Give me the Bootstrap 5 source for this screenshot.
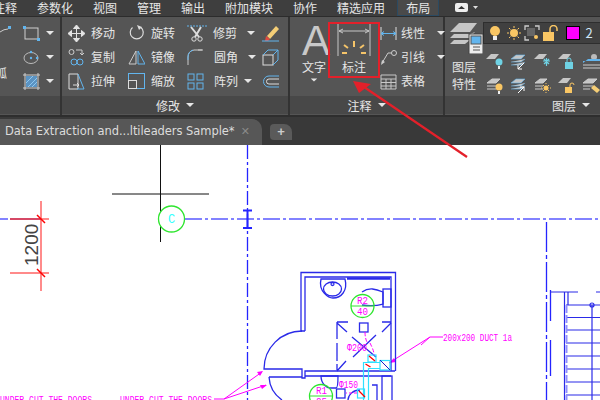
<!doctype html>
<html lang="zh"><head><meta charset="utf-8"><title>AutoCAD</title>
<link href="https://cdn.jsdelivr.net/npm/bootstrap@5.3.0/dist/css/bootstrap.min.css" rel="stylesheet">
<style>
html,body{margin:0;width:600px;height:400px;overflow:hidden;background:#fff}
.cad{position:relative;width:600px;height:400px;overflow:hidden;font-family:"Noto Sans CJK SC","Liberation Sans",sans-serif;font-size:12px;line-height:14px;color:#e6e6e6}
.menu{height:17px;background:#3e3e3e;border-bottom:1px solid #2c2c2c;gap:20px;white-space:nowrap}
.menu>span:first-child{margin-left:-7px}
.menu-on{margin-left:-8px;margin-right:-8px;height:16px;padding:0 8px;background:#4a4a4a;border:1px solid #2b4a62;border-top:0;line-height:15px}
.menu-ico{margin-left:3px;height:16px}
.rib{height:98px;background:#333}
.pnl{background:#555;width:60px;margin-right:2px}
.pnl2{width:226px}.pnl3{width:153px}.pnl4{width:155px;margin-right:0}
.pbody{height:79px}
.ptitle{height:18px;background:#484848;line-height:17px}
.caret{width:0;height:0;border-left:4px solid transparent;border-right:4px solid transparent;border-top:4px solid #e6e6e6;display:inline-block;flex:none}
.ptitle .caret{margin-left:6px}
.left-col{width:23px;overflow:hidden;padding-top:5px}
.left-col span{display:block;margin:30px 0 0 -5px}
.grid3{display:grid;grid-template-rows:repeat(3,24px);padding-top:4px}
.g-mod{grid-template-columns:60px 59px 75px 20px;padding-left:6px}
.g-l{grid-template-columns:34px}
.tool{display:flex;align-items:center;gap:6px;height:24px;white-space:nowrap}
.tool svg{width:17px;height:17px;flex:none}
.txt-big{width:38px;padding-left:12px}
.bigA{font:42px/34px "Liberation Sans",sans-serif;color:#c9c9c9;margin-top:7px;height:34px}
.bigA-lbl{margin-top:2px}
.bigA-car{margin:4px 0 0 8px;display:block;transform:scale(.8)}
.dim-col{width:52px;text-align:center;padding-top:7px}
.dim-col svg{width:34px;height:32px;display:block;margin:0 auto 4px}
.g-ann{grid-template-columns:63px}
.g-ann .tool{gap:4px}
.lyr-big{width:41px;padding-top:5px;text-align:center;line-height:17px}
.lyr-big svg{width:33px;height:32px;display:block;margin:0 0 4px 5px}
.combo{height:22px;background:#404040;border:1px solid #2e2e2e;margin-top:5px;width:120px;padding-left:3px;gap:2.500px}
.combo svg{width:16px;height:16px;flex:none}
.swatch{width:14px;height:14px;background:#f0f;border:1px solid #000;margin-left:5px;flex:none}
.combo-n{color:#cfe6f8;margin-left:3px;font-size:13px}
.lrow{height:24px;gap:6px}
.lrow svg{width:18px;height:18px;flex:none}
.lrows{padding:2px 0 0 3px}
.tabs{height:30px;background:#393939;border-top:2px solid #2e2e2e;padding-top:2px}
.tab-on{width:262px;height:26px;background:#575757;border-radius:0 10px 0 0;padding-left:5px;font:11.500px/25px "DejaVu Sans","Open Sans",sans-serif;letter-spacing:-.06px;color:#dcdcdc;white-space:nowrap}
.tab-x{margin-left:auto;margin-right:12px;font-size:11px;color:#8a8a8a;font-weight:bold}
.tab-plus{width:22px;height:16px;margin:5px 0 0 8px;background:#5a5a5a;border-radius:4px 8px 0 4px;color:#ccc;font:bold 13px/15px "Liberation Sans",sans-serif;text-align:center}
.sheet{height:255px;background:#fff}
.sheet svg{display:block}
.over{position:absolute;left:0;top:0;pointer-events:none}
.cadt{font-family:"Liberation Mono",monospace;fill:#f0f;font-size:10px}
</style></head><body>
<div class="cad d-flex flex-column">
<div class="menu d-flex align-items-center">
<span>注释</span><span>参数化</span><span>视图</span><span>管理</span><span>输出</span><span>附加模块</span><span>协作</span><span>精选应用</span><span class="menu-on">布局</span>
<svg class="menu-ico" width="24" height="12" viewBox="0 0 24 12"><rect x="1" y="1" width="13" height="9" rx="2" fill="#eee"/><path d="M4 7l3.500-3 3.500 3z" fill="#333"/><path d="M19 4h5l-2.500 3z" fill="#ddd"/></svg>
</div>
<div class="rib d-flex">
 <div class="pnl">
  <div class="pbody d-flex">
   <div class="left-col"><svg width="23" height="10" viewBox="0 0 23 10"><path d="M0 6q4-3 8-3" fill="none" stroke="#ccc"/><rect x="8" y="0" width="3" height="3" fill="#62b5ee"/></svg><span>弧</span></div>
   <div class="grid3 g-l">
    <div class="tool"><svg viewBox="0 0 17 17"><rect x="2" y="3" width="13" height="11" fill="none" stroke="#d0d0d0"/><rect x="0" y="1" width="3" height="3" fill="#62b5ee"/><rect x="14" y="13" width="3" height="3" fill="#62b5ee"/></svg><i class="caret"></i></div>
    <div class="tool"><svg viewBox="0 0 17 17"><ellipse cx="8" cy="9" rx="7" ry="5.500" fill="none" stroke="#bbb"/><circle cx="8" cy="3" r="1.200" fill="#62b5ee"/><circle cx="8" cy="9" r="1.200" fill="#62b5ee"/><circle cx="14" cy="9" r="1.200" fill="#62b5ee"/></svg><i class="caret"></i></div>
    <div class="tool"><svg viewBox="0 0 17 17"><path d="M2 0v17M15 0v17M0 2h17M0 15h17" stroke="#d0d0d0" fill="none"/><rect x="3" y="3" width="11" height="11" fill="#5b93c2"/><path d="M3 10l7-7M5 14l9-9M9 14l5-5" stroke="#8fc7ef"/></svg><i class="caret"></i></div>
   </div>
  </div>
  <div class="ptitle"></div>
 </div>
 <div class="pnl pnl2">
  <div class="pbody grid3 g-mod">
   <div class="tool"><svg viewBox="0 0 17 17"><path d="M8.500 1v15M1 8.500h15M8.500 0l3 3.500h-6zM8.500 17l3-3.500h-6zM0 8.500l3.500-3v6zM17 8.500l-3.500-3v6z" stroke="#e4e4e4" fill="#e4e4e4"/></svg><span>移动</span></div>
   <div class="tool"><svg viewBox="0 0 17 17"><path d="M13 2.500a6.500 6.500 0 1 1-8.500 0" fill="none" stroke="#ddd" stroke-width="1.200"/><path d="M9 0l5 2-3 3z" fill="#ddd"/></svg><span>旋转</span></div>
   <div class="tool"><svg viewBox="0 0 20 17" style="width:20px"><path d="M0 1h20" stroke="#62b5ee" stroke-dasharray="2 1"/><path d="M4 2l8 10M14 2l-6 10" stroke="#ddd" stroke-width="2"/><circle cx="7" cy="14" r="2.200" fill="none" stroke="#ddd"/><circle cx="13" cy="14" r="2.200" fill="none" stroke="#ddd"/></svg><span>修剪</span><i class="caret ms-1"></i></div>
   <svg viewBox="0 0 17 17" width="17" height="17" class="align-self-center"><path d="M5 11L14 1l3 3-9 10z" fill="#f5ce76"/><path d="M4 11l4 3-2 2H3z" fill="#e04a3f"/><path d="M0 16h17" stroke="#62b5ee"/></svg>

   <div class="tool"><svg viewBox="0 0 17 17"><circle cx="3.500" cy="3" r="2.500" fill="none" stroke="#ccc"/><circle cx="6" cy="13" r="3" fill="none" stroke="#62b5ee"/><circle cx="12" cy="13" r="3" fill="none" stroke="#62b5ee"/><path d="M8 1h6v4M12 4l2 2 2-2" fill="none" stroke="#ccc"/></svg><span>复制</span></div>
   <div class="tool"><svg viewBox="0 0 17 17"><path d="M8 2L1 15h7z" fill="none" stroke="#ccc"/><path d="M10 2l7 13h-7z" fill="none" stroke="#62b5ee"/></svg><span>镜像</span></div>
   <div class="tool"><svg viewBox="0 0 17 17"><path d="M1 16V8Q1 2 7 1h8M11 1h5" fill="none" stroke="#ccc"/><path d="M1 11V8Q1 3 6 1" fill="none" stroke="#62b5ee"/></svg><span class="ms-1">圆角</span><i class="caret ms-1"></i></div>
   <svg viewBox="0 0 17 17" width="17" height="17" class="align-self-center"><rect x="1" y="6" width="10" height="10" fill="none" stroke="#ddd"/><path d="M1 6l5-5h10v10l-5 5M11 6l5-5" fill="none" stroke="#62b5ee"/></svg>

   <div class="tool"><svg viewBox="0 0 17 17"><path d="M1 1h9v15H1z" fill="none" stroke="#ddd"/><path d="M10 1l6 15H9" fill="none" stroke="#62b5ee"/><path d="M5 12h6M9 10l2 2-2 2" stroke="#ddd" fill="none"/></svg><span>拉伸</span></div>
   <div class="tool"><svg viewBox="0 0 17 17"><rect x="0.500" y="0.500" width="16" height="15" fill="none" stroke="#62b5ee"/><rect x="0.500" y="7.500" width="8" height="8" fill="#555" stroke="#ddd"/></svg><span>缩放</span></div>
   <div class="tool"><svg viewBox="0 0 17 17"><g fill="none" stroke="#62b5ee"><rect x="1" y="1" width="6" height="6"/><rect x="10" y="1" width="6" height="6"/><rect x="1" y="10" width="6" height="6"/><rect x="10" y="10" width="6" height="6"/></g></svg><span class="ms-1">阵列</span><i class="caret"></i></div>
   <svg viewBox="0 0 17 17" width="17" height="17" class="align-self-center"><path d="M17 3H7a5 5 0 0 0 0 11h10" fill="none" stroke="#62b5ee"/><path d="M17 6H7a2.500 2.500 0 0 0 0 5h10" fill="none" stroke="#ddd"/></svg>
  </div>
  <div class="ptitle d-flex align-items-center justify-content-center">修改<i class="caret"></i></div>
 </div>
 <div class="pnl pnl3">
  <div class="pbody d-flex">
   <div class="txt-big"><div class="bigA">A</div><div class="bigA-lbl">文字</div><i class="caret bigA-car"></i></div>
   <div class="dim-col"><svg viewBox="0 0 34 32"><path d="M1 0v32M33 0v32M2 7h30M6 5L2 7l4 2M28 5l4 2-4 2" fill="none" stroke="#c8c8c8"/><path d="M17 17v6M7 21l4 3M27 21l-4 3M5 29h5M24 29h5" stroke="#f5c469" stroke-width="2"/></svg>标注</div>
   <div class="grid3 g-ann">
    <div class="tool"><svg viewBox="0 0 17 17"><path d="M1 2v13M16 2v13" stroke="#ddd"/><path d="M1 8.500h15M4 6.500L1 8.500l3 2M13 6.500l3 2-3 2" stroke="#62b5ee" fill="none"/></svg><span>线性</span><i class="caret ms-2"></i></div>
    <div class="tool"><svg viewBox="0 0 17 17"><circle cx="14" cy="4" r="2.500" fill="none" stroke="#ccc"/><path d="M11.500 4H8L2 14" fill="none" stroke="#ccc"/><path d="M1 16l1-5 3 2z" fill="#ccc"/></svg><span>引线</span><i class="caret ms-2"></i></div>
    <div class="tool"><svg viewBox="0 0 17 17"><path d="M1 2h15v14H1zM1 6h15M1 9.500h15M1 13h15M6 6v10M11 6v10" fill="none" stroke="#c8c8c8"/></svg><span>表格</span></div>
   </div>
  </div>
  <div class="ptitle d-flex align-items-center justify-content-center">注释<i class="caret"></i></div>
 </div>
 <div class="pnl pnl4">
  <div class="pbody d-flex">
   <div class="lyr-big"><svg viewBox="0 0 33 32"><g fill="#c6c6c6"><path d="M0 10L9 1h18l-7 9z"/><path d="M0 16l4-4h16l5-2-5 6z"/><path d="M0 22l4-4h16l-5 4z"/></g><rect x="19" y="12" width="14" height="20" fill="#eee" stroke="#444"/><rect x="21" y="14" width="10" height="8" fill="#62b5ee" stroke="#555"/><path d="M23 25h7M23 28h7" stroke="#555"/></svg>图层<br>特性</div>
   <div>
    <div class="combo d-flex align-items-center">
     <svg viewBox="0 0 16 16"><circle cx="8" cy="6" r="5" fill="#f9c664"/><rect x="6" y="11" width="4" height="4" fill="#eee"/></svg>
     <svg viewBox="0 0 16 16"><circle cx="8" cy="8" r="4" fill="#f9c664"/><path d="M8 1v2M8 13v2M1 8h2M13 8h2M3 3l1.500 1.500M13 3l-1.500 1.500M3 13l1.500-1.500M13 13l-1.500-1.500" stroke="#f9c664"/></svg>
     <svg viewBox="0 0 16 16"><path d="M1 5V1h4M11 1h4v4M1 11v4h4" fill="none" stroke="#ccc" stroke-width="1.300"/><rect x="3" y="3" width="8" height="8" fill="#666"/><circle cx="12" cy="12" r="2" fill="#f9c664"/></svg>
     <svg viewBox="0 0 16 16"><rect x="0" y="7" width="11" height="9" fill="#f9c664"/><path d="M7 7V4a3.500 3.500 0 0 1 7 0v2" fill="none" stroke="#f9c664" stroke-width="1.500"/></svg>
     <span class="swatch"></span><span class="combo-n">2</span>
    </div>
    <div class="lrows">
     <div class="lrow d-flex align-items-center mt-1">
      <svg viewBox="0 0 18 18"><path d="M0 6L5 1h8L9 6z" fill="#c6c6c6"/><circle cx="13" cy="9" r="3.500" fill="#6fd2e4"/><rect x="12" y="13" width="2" height="3" fill="#eee"/></svg>
      <svg viewBox="0 0 18 18"><path d="M1 6l5-4h9l-4 4zM1 9h10l4-3M1 12h10l4-3" fill="#c6c6c6" stroke="#62b5ee" stroke-width=".6"/><path d="M14 10l-6 6M8 12v4h4" stroke="#fff" fill="none"/></svg>
      <svg viewBox="0 0 18 18"><path d="M0 6L5 1h8L9 6z" fill="#c6c6c6"/><path d="M9 8h7M12.500 5v8M10 6l5 5M15 6l-5 5" stroke="#6fd2e4" stroke-width="1.200"/></svg>
      <svg viewBox="0 0 18 18"><path d="M0 6L5 1h8L9 6z" fill="#c6c6c6"/><rect x="7" y="9" width="8" height="7" fill="#6fd2e4"/><path d="M9 9V7a2 2 0 0 1 4 0v2" fill="none" stroke="#6fd2e4"/></svg>
      <svg viewBox="0 0 18 18"><circle cx="12" cy="4" r="3" fill="#bbb"/><path d="M1 10l5-4h12v2H1z" fill="#62b5ee"/><path d="M1 12h17M1 15h17" stroke="#ccc"/></svg>
     </div>
     <div class="lrow d-flex align-items-center">
      <svg viewBox="0 0 18 18"><path d="M1 6l5-4h8l-4 4zM1 9h9M1 12h9" fill="#c6c6c6" stroke="#ccc"/><circle cx="13" cy="10" r="3.500" fill="#f9c664"/><rect x="12" y="14" width="2" height="3" fill="#eee"/></svg>
      <svg viewBox="0 0 18 18"><path d="M1 6l5-4h9l-4 4zM1 9h10l4-3M1 12h10l4-3" fill="#c6c6c6" stroke="#62b5ee" stroke-width=".6"/><path d="M8 16l6-6M10 10h4v4" stroke="#fff" fill="none"/></svg>
      <svg viewBox="0 0 18 18"><path d="M1 6l5-4h7l-4 4zM1 9h8M1 12h8" fill="#c6c6c6" stroke="#ccc"/><circle cx="12" cy="11" r="2.500" fill="#f9c664"/><path d="M12 6v1M12 15v1M7 11h1M16 11h1M9 8l1 1M15 8l-1 1M9 14l1-1M15 14l-1-1" stroke="#f9c664"/></svg>
      <svg viewBox="0 0 18 18"><path d="M0 6L5 1h8L9 6z" fill="#c6c6c6"/><rect x="7" y="10" width="7" height="6" fill="#f9c664"/><path d="M12 10V8a2 2 0 0 1 4 0" fill="none" stroke="#f9c664"/></svg>
      <svg viewBox="0 0 18 18"><path d="M1 6l5-4h9l-4 4zM1 9h10M1 12h7" fill="#c6c6c6" stroke="#ccc"/><path d="M9 11l6 5 3-3-6-5z" fill="#f5ce76"/></svg>
     </div>
    </div>
   </div>
  </div>
  <div class="ptitle d-flex align-items-center" style="padding-left:107px">图层<i class="caret"></i></div>
 </div>
</div>
<div class="tabs d-flex">
 <div class="tab-on d-flex"><span>Data Extraction and...ltileaders Sample*</span><span class="tab-x">✕</span></div>
 <div class="tab-plus">+</div>
</div>
<div class="sheet">
<svg width="600" height="255" viewBox="0 145 600 255">
 <g fill="none" stroke="#5a5aff" stroke-width="1.500">
  <path d="M0 219H10" stroke-dasharray="8 2 2 2"/>
  <path d="M185 219H600" stroke-dasharray="17 3 3 3"/>
 </g>
 <g fill="none" stroke="#2424ff" stroke-width="1.300">
  <path d="M247.500 145V400" stroke-dasharray="14 3 3 3"/>
  <path d="M546.500 222V400" stroke-dasharray="30 3 4 3"/>
  <path d="M243 210.500h9M243 228h9" stroke-width="2"/><path d="M247.500 210v18" stroke-width="2"/>
  <path d="M550.500 290v31M550.500 340v36"/>
 </g>
 <path d="M112 194H209M160.500 145V242" stroke="#111" fill="none"/>
 <circle cx="171.500" cy="219" r="13" fill="#fff" stroke="#2fe52f" stroke-width="1.300"/>
 <text x="168" y="223" font-family="Liberation Mono,monospace" font-size="12" fill="#3ff">C</text>
 <g stroke="#ff6464" stroke-width="1.500" fill="none"><path d="M41 201V291"/><path d="M10 219H49M10 273H49"/></g>
 <path d="M10 219H41" stroke="#c8325a" stroke-width="1.500"/>
 <path d="M37 215l8 8M37 269l8 8" stroke="#f00" stroke-width="1.500"/>
 <text transform="translate(37.500,266) rotate(-90)" font-family="Liberation Sans,sans-serif" font-size="19" fill="#444">1200</text>

 <text class="cadt" x="0" y="403" textLength="92" lengthAdjust="spacingAndGlyphs">UNDER CUT THE DOORS</text>
 <text class="cadt" x="120" y="403" textLength="92" lengthAdjust="spacingAndGlyphs">UNDER CUT THE DOORS</text>
 <g stroke="#f0f" fill="none"><path d="M214 399h10l38-27M224 399l42-14"/><path d="M421 345l9-8h13M430 337l-41 26"/></g>
 <path d="M263 371l-6 1 3 4zM267 385l-7 0 2 4zM389 363l5-5 2 4z" fill="#f0f"/>
 <text class="cadt" x="443" y="341" textLength="69" lengthAdjust="spacingAndGlyphs" font-size="11">200x200 DUCT 1a</text>

 <g fill="none" stroke="#2a2ae8" stroke-width="1.300">
  <path d="M305 331H301V272.500H395.500V371M305 331V277H391V371"/>
  <path d="M347 278.500h43" stroke-width="2.500"/>
  <path d="M302 331A38 38 0 0 0 264 369H302V378H305V371H395"/>
  <path d="M305 376H391M269 377H302M269 377A30 30 0 0 0 282 400"/>
  <path d="M321 279c-3 13 8 19 12 19 8 0 15-7 12-19z"/>
  <ellipse cx="332.500" cy="289" rx="9" ry="7"/>
  <circle cx="332.500" cy="284" r="1.500"/>
  <path d="M362 292c7-5 14-3 21 0v12c-7 2-14 2-21 1"/>
  <rect x="383" y="289" width="8" height="18"/>
  <path d="M337 322v17M337 343v18M337 364v6M337 322h11M382 322h9M337 323l10 9M391 323l-9 9M352 337l24 20M376 335l-23 22M337 371l9-10"/>
  <rect x="359.500" y="323" width="8.500" height="9"/>
  <path d="M321 376c0 8 6 12 9 12h6c2 0 2-12 2-12z"/>
  <rect x="336.500" y="389" width="8.500" height="9"/>
  <path d="M348 400c0-5 5-10 12-10"/>
  <path d="M372 385h5v15"/>
  <rect x="382" y="376" width="10" height="30"/>
 </g>
 <g fill="none" stroke="#2fe0ff" stroke-width="1.200">
  <path d="M363.500 400V362.500H380M368.500 400V368.500H380"/>
  <rect x="380" y="360.500" width="10" height="9.500"/>
  <rect x="368" y="355" width="8" height="7"/>
  <rect x="357.500" y="389" width="7" height="9"/>
 </g>
 <path d="M369 356l6 5M365.500 364l5 3M359 391l6 6" stroke="#f00" stroke-width="1.300" fill="none"/>
 <path d="M380 360l10 10" stroke="#1a1ac8"/>
 <path d="M365 332c0 5 1 8 2 10M370 343c2 4 4 8 4 12" fill="none" stroke="#f0f" stroke-dasharray="4 2"/>
 <path d="M357 393h-11" stroke="#f0f" stroke-dasharray="3 2"/>
 <circle cx="362.500" cy="306" r="11.500" fill="none" stroke="#2fe52f" stroke-width="1.300"/>
 <path d="M351 306h23" stroke="#2fe52f"/>
 <text class="cadt" x="357" y="304" textLength="11" lengthAdjust="spacingAndGlyphs">R2</text><text class="cadt" x="357" y="315" textLength="11" lengthAdjust="spacingAndGlyphs">40</text>
 <circle cx="321" cy="396" r="11.500" fill="none" stroke="#2fe52f" stroke-width="1.300"/>
 <path d="M310 396h23" stroke="#2fe52f"/>
 <text class="cadt" x="316" y="394" textLength="11" lengthAdjust="spacingAndGlyphs">R1</text><text class="cadt" x="316" y="405" textLength="11" lengthAdjust="spacingAndGlyphs">25</text>
 <text class="cadt" x="347" y="351" textLength="20" lengthAdjust="spacingAndGlyphs" font-size="12">Φ200</text>
 <text class="cadt" x="339" y="388" textLength="19" lengthAdjust="spacingAndGlyphs" font-size="12">Φ150</text>

 <g fill="none" stroke="#2a2ae8" stroke-width="1.200">
  <path d="M550 292H578M596 292H600"/>
  <path d="M564.500 292V400M568 292V305" />
  <path d="M566 305H600M566 317.500H600M566 330H600M566 343H600M566 356H600M566 369H600M566 382H600M566 395H600"/>
  <path d="M592 305V400"/>
  <circle cx="592" cy="305" r="2"/>
 </g>
 <path d="M566.500 305V400" stroke="#8f8fff" stroke-width="2" stroke-dasharray="8 2" fill="none"/>
</svg>
</div>
<svg class="over" width="600" height="400" viewBox="0 0 600 400">
 <rect x="329" y="23" width="50" height="54" fill="none" stroke="#e3202a" stroke-width="2"/>
 <path d="M467 157L364 87" stroke="#e3202a" stroke-width="2.200"/>
 <path d="M353 81L371 84L359 93z" fill="#e3202a"/>
</svg>
</div>
</body></html>
